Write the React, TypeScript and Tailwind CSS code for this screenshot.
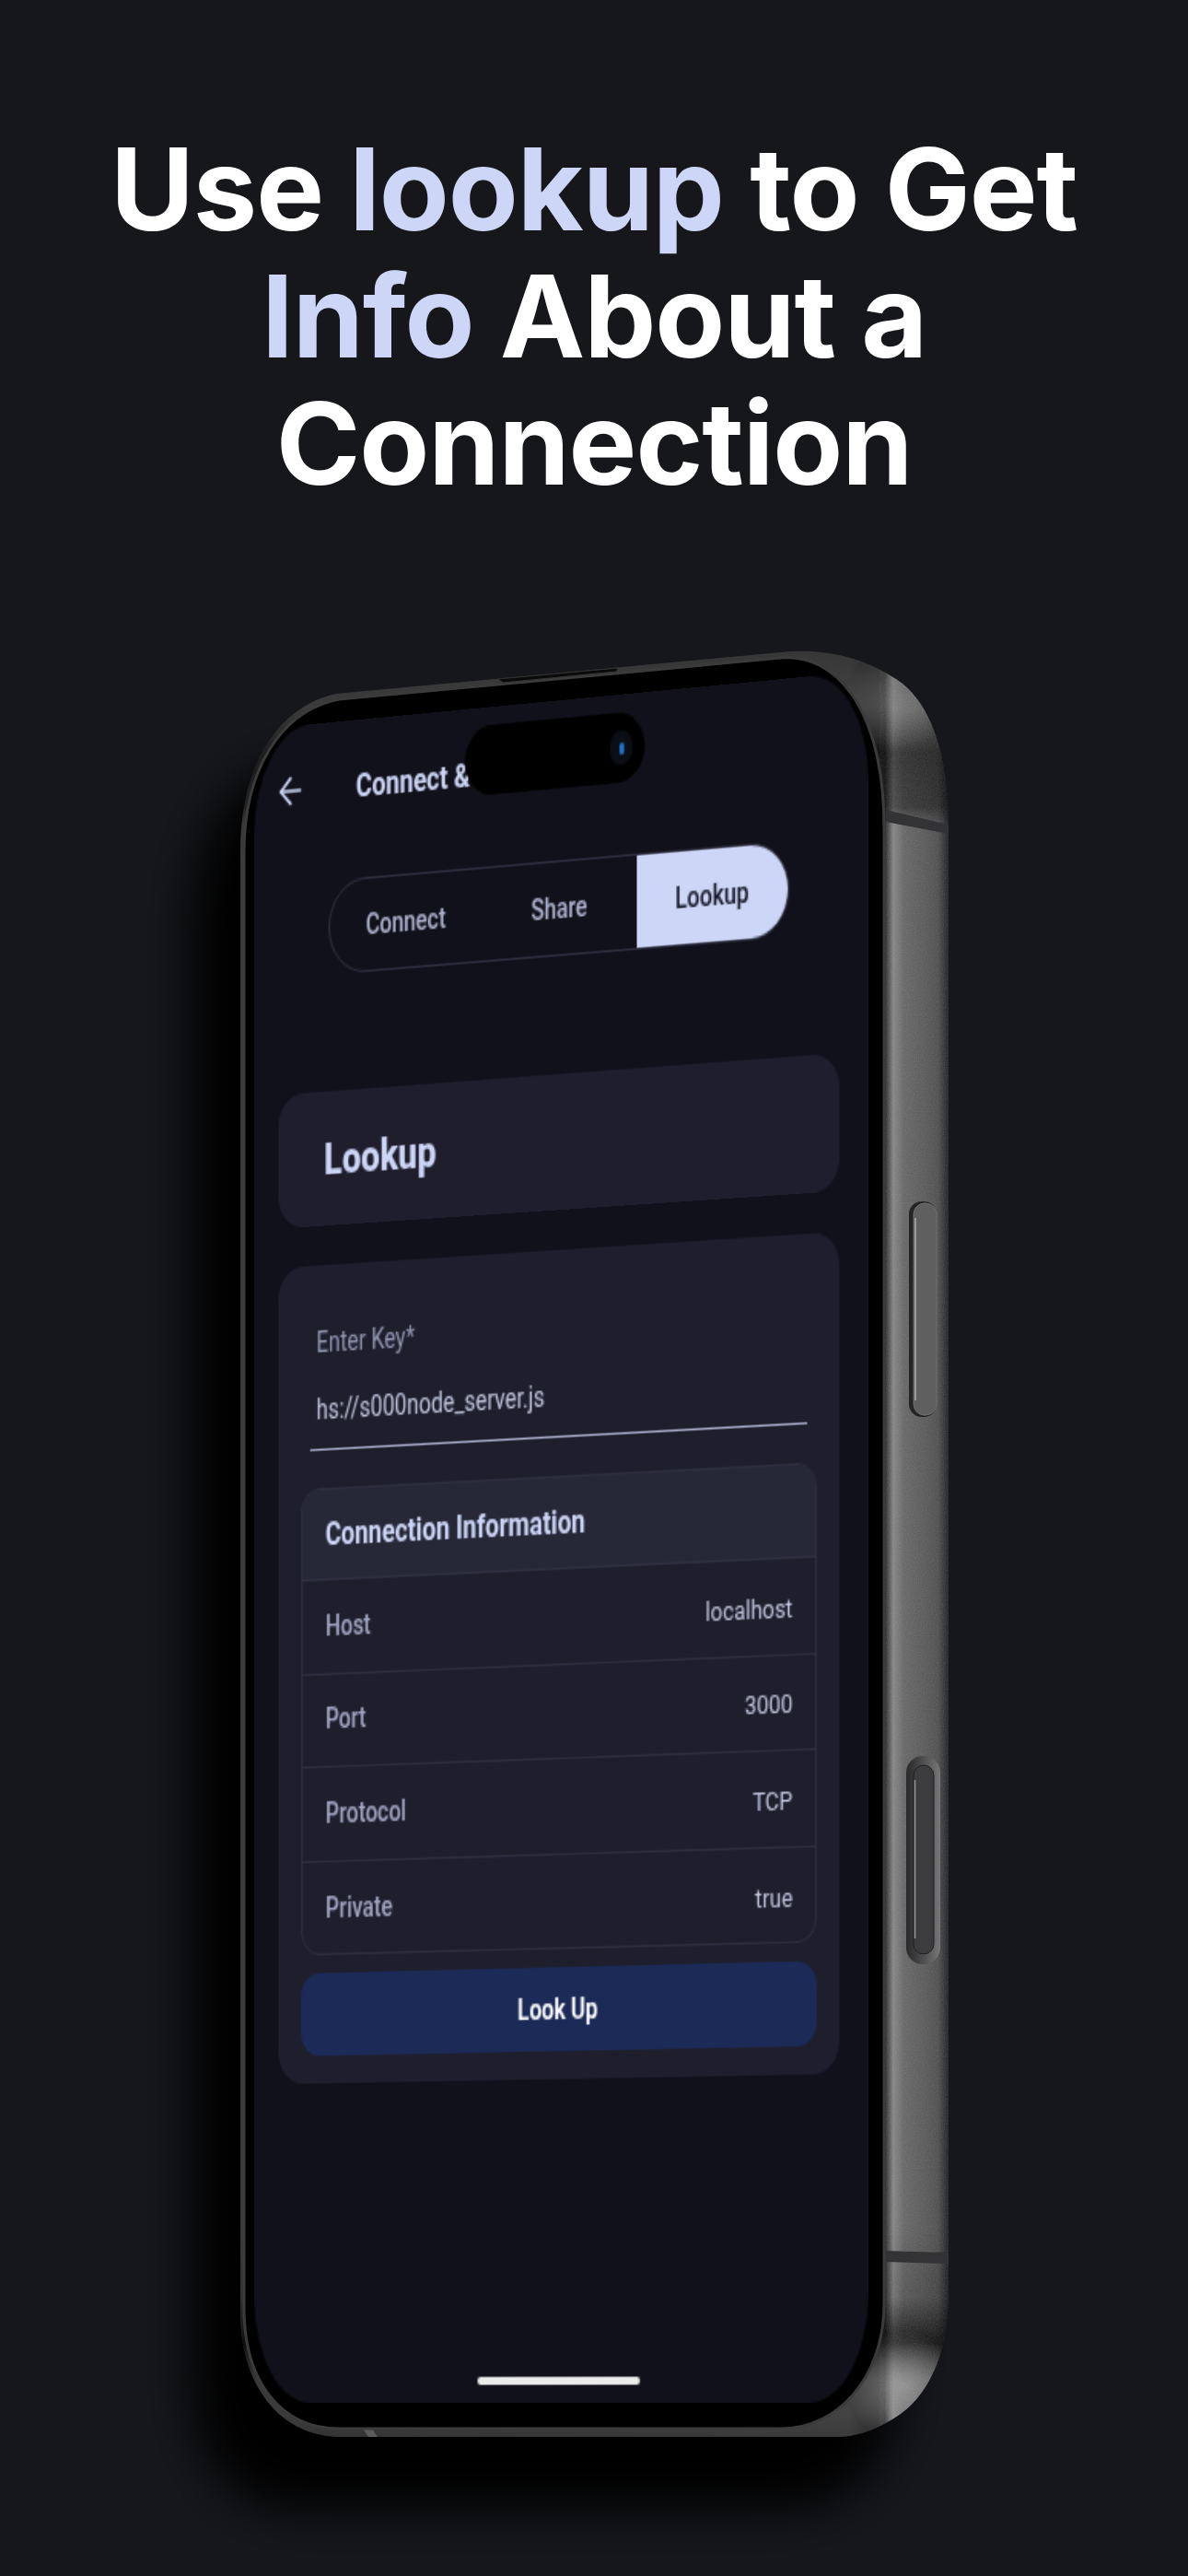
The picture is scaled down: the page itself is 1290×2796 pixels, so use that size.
import React from "react";
import { ArrowLeft } from "lucide-react";

const METAL =
  "M261 925C261 835 298 768 365 753L848 708C890 703 940 712 980 742C1014 770 1030 825 1030 900L1030 2490C1030 2555 1008 2598 978 2620C952 2638 930 2645 908 2645L370 2645C305 2645 261 2590 261 2510Z";
const FRONT =
  "M265 925C265 838 303 772 368 759L848 714C905 709 960 765 960 900L960 2500C960 2585 905 2636 850 2636L368 2636C305 2636 265 2585 265 2505Z";

function Device() {
  return (
    <svg viewBox="0 0 1290 2796" className="absolute inset-0 w-[1290px] h-[2796px]">
      <defs>
        <linearGradient id="metalH" gradientUnits="userSpaceOnUse" x1="261" y1="0" x2="1030" y2="0">
          <stop offset="0" stopColor="#3a3a3a" />
          <stop offset="0.86" stopColor="#434343" />
          <stop offset="0.91" stopColor="#2a2a2a" />
          <stop offset="0.922" stopColor="#868686" />
          <stop offset="0.937" stopColor="#686868" />
          <stop offset="0.965" stopColor="#5c5c5c" />
          <stop offset="0.985" stopColor="#525252" />
          <stop offset="1" stopColor="#242528" />
        </linearGradient>
        <linearGradient id="metalV" gradientUnits="userSpaceOnUse" x1="0" y1="700" x2="0" y2="2650">
          <stop offset="0" stopColor="#000" stopOpacity="0.2" />
          <stop offset="0.035" stopColor="#000" stopOpacity="0" />
          <stop offset="0.06" stopColor="#000" stopOpacity="0.5" />
          <stop offset="0.09" stopColor="#000" stopOpacity="0.42" />
          <stop offset="0.1" stopColor="#000" stopOpacity="0" />
          <stop offset="0.88" stopColor="#000" stopOpacity="0" />
          <stop offset="0.92" stopColor="#000" stopOpacity="0.15" />
          <stop offset="0.945" stopColor="#000" stopOpacity="0.72" />
          <stop offset="0.965" stopColor="#000" stopOpacity="0.05" />
          <stop offset="0.985" stopColor="#000" stopOpacity="0" />
          <stop offset="1" stopColor="#000" stopOpacity="0.15" />
        </linearGradient>
        <radialGradient id="hiTop" gradientUnits="userSpaceOnUse" cx="975" cy="760" r="55">
          <stop offset="0" stopColor="#808080" stopOpacity="0.6" />
          <stop offset="1" stopColor="#808080" stopOpacity="0" />
        </radialGradient>
        <radialGradient id="hiBottom" gradientUnits="userSpaceOnUse" cx="980" cy="2590" r="60">
          <stop offset="0" stopColor="#a0a0a0" stopOpacity="0.75" />
          <stop offset="1" stopColor="#a0a0a0" stopOpacity="0" />
        </radialGradient>
        <linearGradient id="btnRing" x1="0" y1="0" x2="1" y2="0">
          <stop offset="0" stopColor="#2a2a2c" />
          <stop offset="0.25" stopColor="#3a3a3c" />
          <stop offset="1" stopColor="#777" />
        </linearGradient>
        <filter id="blurShadow" x="-20%" y="-20%" width="140%" height="140%">
          <feGaussianBlur stdDeviation="26" />
        </filter>
        <filter id="grain" x="0" y="0" width="100%" height="100%">
          <feTurbulence type="fractalNoise" baseFrequency="0.9" numOctaves="2" seed="4" />
          <feColorMatrix values="0 0 0 0 1  0 0 0 0 1  0 0 0 0 1  0.9 0 0 0 -0.3" />
        </filter>
        <clipPath id="metalClip">
          <path d={METAL} />
        </clipPath>
      </defs>

      <path d={METAL} fill="#000" transform="translate(-52 78)" filter="url(#blurShadow)" />

      <path d={METAL} fill="url(#metalH)" />
      <path d={METAL} fill="url(#metalV)" />
      <path d={METAL} fill="url(#hiTop)" />
      <path d={METAL} fill="url(#hiBottom)" />
      <g clipPath="url(#metalClip)">
        <rect x="955" y="700" width="80" height="1950" filter="url(#grain)" opacity="0.2" />
        <polygon points="962,879 1030,895 1030,905 962,892" fill="#333335" />
        <polygon points="961,2443 1030,2445 1030,2457 961,2455" fill="#333335" />
        <polygon points="394,2636 404,2636 410,2645 400,2645" fill="#5c5c5c" />
      </g>

      <path d={FRONT} fill="#000" stroke="#3b3b3b" strokeWidth="3" />
      <path d="M541 737L671 725L669 729L546 741Z" fill="#0a0a0a" stroke="#333" strokeWidth="1" />

      <rect x="987" y="1304" width="30" height="234" rx="14" fill="#242426" />
      <rect x="992" y="1306" width="25" height="230" rx="12" fill="#5f5f60" stroke="#6f6f6f" strokeWidth="1" />
      <path d="M994 1322L994 1520" stroke="#b5b5b5" strokeWidth="1.4" fill="none" />

      <rect x="984" y="1906" width="37" height="226" rx="18" fill="url(#btnRing)" />
      <rect x="992" y="1916" width="22" height="205" rx="11" fill="#3c3c3e" stroke="#1f1f21" strokeWidth="1" />
      <path d="M993.5 1932L993.5 2104" stroke="#9a9a9a" strokeWidth="1.4" fill="none" />
    </svg>
  );
}

function Row({ label, value, last }: { label: string; value: string; last?: boolean }) {
  return (
    <div className={`flex items-center justify-between pl-[15px] pr-[14px] h-[47.5px] ${last ? "" : "border-b border-[#2d2e3f]"}`}>
      <span className="text-[14px] font-medium text-[#a0a6c2]">{label}</span>
      <span className="text-[13.4px] leading-[20px] mb-[-3px] text-[#c2c7df]">{value}</span>
    </div>
  );
}

function Screen() {
  return (
    <div className="absolute left-0 top-0 w-[393px] h-[852px] overflow-hidden rounded-[37px/54px] bg-[#10111a] font-['Roboto',sans-serif] origin-top-left [transform:matrix3d(1.61552,-0.2259,0,-0.00008662,0,2.13146,0,0,0,0,1,0,276,792,0,1)]">
      <div className="flex items-center h-[66px] pl-[13px]">
        <ArrowLeft size={22} strokeWidth={1.7} color="#cdd6f6" className="mt-[-1px]" />
        <span className="ml-[32px] mt-[2px] text-[16px] font-bold text-[#cdd6f6]">Connect &amp; Share</span>
      </div>

      <div className="absolute left-[138px] top-[9px] w-[115px] h-[35px] rounded-full bg-black">
        <div className="absolute right-[8px] top-[9px] w-[14px] h-[17px] rounded-full bg-[#0b0e14] flex items-center justify-center">
          <div className="w-[3px] h-[6px] rounded-full bg-[#1d6fc4]" />
        </div>
      </div>

      <div className="ml-[49px] mt-[14px] w-[295px] h-[48px] flex rounded-full overflow-hidden border border-[#2f3040]">
        <div className="w-[99px] flex items-center justify-center text-[14px] font-medium text-[#aeb4cf]">Connect</div>
        <div className="w-[99px] flex items-center justify-center text-[14px] font-medium text-[#aeb4cf]">Share</div>
        <div className="flex-1 flex items-center justify-center text-[14px] font-medium text-[#16182a] bg-[#cdd6f6]">Lookup</div>
      </div>

      <div className="ml-4 mr-[18px] mt-[59px] h-[68px] rounded-[16px] bg-[#1e1e2d] flex items-center pl-[30px]">
        <span className="text-[22px] font-extrabold text-[#cdd6f6]">Lookup</span>
      </div>

      <div className="ml-4 mr-[18px] mt-[20px] h-[415px] rounded-[16px] bg-[#1e1e2d] pl-[15px] pr-[14px] pt-[29px]">
        <div className="mx-[6px] pb-[10px] border-b border-[#a9aecb]">
          <div className="pl-1 h-5 leading-5 text-[14px] text-[#9297b2]">Enter Key*</div>
          <div className="pl-1 mt-[14px] h-5 leading-5 text-[14px] text-[#c2c7df]">hs://s000node_server.js</div>
        </div>
        <div className="mt-[19px] h-[237px] rounded-[12px] overflow-hidden border border-[#2d2e3f]">
          <div className="h-[46px] flex items-center px-[15px] bg-[#262838] border-b border-[#2f3042]">
            <span className="text-[15.8px] font-bold text-[#cdd6f6]">Connection Information</span>
          </div>
          <Row label="Host" value="localhost" />
          <Row label="Port" value="3000" />
          <Row label="Protocol" value="TCP" />
          <Row label="Private" value="true" last />
        </div>
        <div className="mt-[9px] h-[42px] rounded-[12px] bg-[#1c2a57] flex items-center justify-center pl-[3px] text-[14px] font-semibold text-white">Look Up</div>
      </div>

      <div className="absolute left-[146px] bottom-[9px] w-[104px] h-[4px] rounded-full bg-[#ececec]" />
    </div>
  );
}

export default function App() {
  return (
    <div className="relative w-[1290px] h-[2796px] overflow-hidden bg-[#15171b]">
      <h1 className="pt-[136px] text-center text-[124px] leading-[138px] font-bold tracking-[-0.0085em] text-white font-['Inter',sans-serif]">
        Use <span className="text-[#cdd6f6]">lookup</span> to Get
        <br />
        <span className="text-[#cdd6f6]">Info</span> About a
        <br />
        Connection
      </h1>
      <Device />
      <Screen />
    </div>
  );
}
